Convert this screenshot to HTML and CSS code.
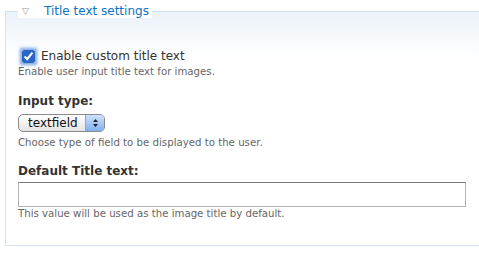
FILE: index.html
```html
<!DOCTYPE html>
<html lang="en">
<head>
  <meta charset="UTF-8" />
  <title>Title text settings</title>
  <link rel="stylesheet" href="styles.css">
</head>
<body>
  <fieldset class="settings">
    <legend><span class="toggle">▽</span><span class="legend-text">Title text settings</span></legend>
    <div class="item">
      <label class="check"><input type="checkbox" checked> Enable custom title text</label>
      <div class="desc">Enable user input title text for images.</div>
    </div>
    <div class="item">
      <label class="title">Input type:</label>
      <div class="select"><span>textfield</span><span class="arrows"><svg width="7" height="10" viewBox="0 0 7 10"><path d="M3.5 1 L6 4 H1 Z M3.5 9 L6 6 H1 Z" fill="#222"/></svg></span></div>
      <div class="desc">Choose type of field to be displayed to the user.</div>
    </div>
    <div class="item">
      <label class="title">Default Title text:</label>
      <input class="text" type="text">
      <div class="desc">This value will be used as the image title by default.</div>
    </div>
  </fieldset>
</body>
</html>
```
FILE: styles.css
```css
* { box-sizing: border-box; }
body { margin: 0; padding: 4px 0 0 5px; background: #fff; font-family: "DejaVu Sans", Verdana, sans-serif; color: #333; overflow: hidden; }

.settings { margin: 0; width: 490px; height: 242px; border: 1px solid #d6e2ee; border-right: none; padding: 29px 0 0 12px; background: linear-gradient(#eaf2f9, #fff 45px); }
.settings legend { padding: 0; display: flex; align-items: center; height: 14px; }
.toggle { color: #999; font-size: 9px; width: 26px; padding-left: 4px; line-height: 14px; background: #fff; }
.legend-text { color: #0a74c5; font-size: 12px; line-height: 14px; padding-right: 3px; background: #fff; }

.item { margin-bottom: 14px; }
.item:first-of-type { margin-bottom: 15px; }
.check { display: flex; align-items: center; gap: 6px; font-size: 12px; color: #333; height: 18px; margin-left: 4px; }
.check input { width: 13px; height: 13px; margin: 0; accent-color: #2a66c6; box-shadow: 0 0 3px 2px #7aa6e8; border-radius: 3px; }
.desc { font-size: 10.2px; line-height: 14px; color: #666; }
.title { display: block; font-weight: bold; font-size: 12px; line-height: 15px; color: #333; }

.select { display: flex; align-items: center; justify-content: space-between; width: 87px; height: 18px; margin: 5px 0 4px; border: 1px solid #8a8a8a; border-radius: 5px; background: linear-gradient(#fff, #e4e4e4); font-size: 12px; color: #111; padding-left: 9px; overflow: hidden; }
.arrows { width: 19px; height: 16px; display: flex; align-items: center; justify-content: center; background: linear-gradient(#cfe2fb, #7fb0ee); border-left: 1px solid #8aa6cc; }

.text { display: block; width: 448px; height: 25px; margin: 3px 0 0; border: 1px solid #b4b4b4; border-top-color: #777; background: #fff; }
```
